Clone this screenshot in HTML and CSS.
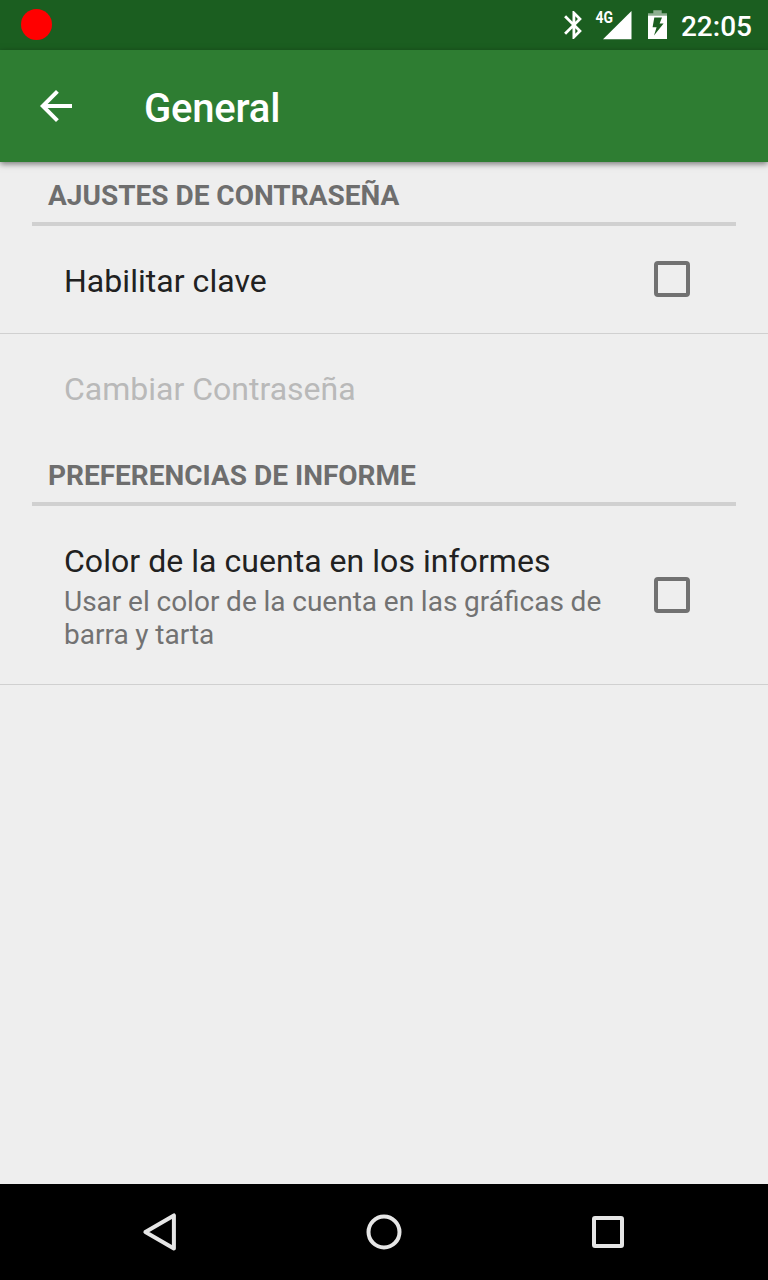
FILE: index.html
```html
<!DOCTYPE html>
<html lang="es">
<head>
<meta charset="utf-8">
<title>General</title>
<link rel="stylesheet" href="styles.css">
</head>
<body>
<div class="screen">
  <div class="status-bar">
    <span class="record-dot"></span>
    <div class="status-icons">
      <svg class="bluetooth" width="18" height="28" viewBox="5 2 12.71 20"><path fill="#fff" d="M17.71 7.71L12 2h-1v7.59L6.41 5 5 6.41 10.59 12 5 17.59 6.41 19 11 14.41V22h1l5.71-5.71-4.3-4.29 4.3-4.29zM13 5.83l1.88 1.88L13 9.59V5.83zm1.88 10.46L13 18.17v-3.76l1.88 1.88z"/></svg>
      <svg class="signal" width="36" height="30" viewBox="0 0 36 30"><path fill="#fff" d="M7 29.3L35.5 1v28.3z"/><text class="network" x="-0.5" y="13" textLength="17.5" lengthAdjust="spacingAndGlyphs">4G</text></svg>
      <svg class="battery" width="19" height="30" viewBox="0 0 19 30"><path fill="#fff" fill-opacity=".5" d="M5.3 .3h8.4v3H19v2.2H0V3.3h5.3z"/><path fill="#fff" fill-rule="evenodd" d="M0 5.5h19V29H0zM6.3 7.5L4.6 17.2h4L6 25.6l9.6-12.2h-4L14 7.5z"/></svg>
      <span class="clock">22:05</span>
    </div>
  </div>
  <header class="toolbar">
    <svg class="back" width="32" height="32" viewBox="4 4 16 16"><path fill="#fff" d="M20 11H7.83l5.59-5.59L12 4l-8 8 8 8 1.41-1.41L7.83 13H20v-2z"/></svg>
    <h1 class="title">General</h1>
  </header>
  <main class="settings">
    <h2 class="category">AJUSTES DE CONTRASEÑA</h2>
    <div class="preference divided">
      <div class="label">Habilitar clave</div>
      <span class="checkbox"></span>
    </div>
    <div class="preference disabled">
      <div class="label">Cambiar Contraseña</div>
    </div>
    <h2 class="category">PREFERENCIAS DE INFORME</h2>
    <div class="preference divided two-part">
      <div class="texts">
        <div class="label">Color de la cuenta en los informes</div>
        <div class="summary">Usar el color de la cuenta en las gráficas de barra y tarta</div>
      </div>
      <span class="checkbox"></span>
    </div>
  </main>
  <nav class="nav-bar">
    <svg width="40" height="40" viewBox="0 0 40 40"><path class="nav-shape" d="M33.9 3.4v33.2L5.4 20z"/></svg>
    <svg width="40" height="40" viewBox="0 0 40 40"><circle class="nav-shape" cx="20" cy="20" r="15.5"/></svg>
    <svg width="40" height="40" viewBox="0 0 40 40"><rect class="nav-shape" x="6" y="6" width="28" height="28" rx="1"/></svg>
  </nav>
</div>
</body>
</html>
```
FILE: styles.css
```css
* { box-sizing: border-box; }
body { margin: 0; font-family: Roboto, sans-serif; }
svg { display: block; flex: none; }
.screen {
  display: flex;
  flex-direction: column;
  width: 768px;
  height: 1280px;
  background: #eee;
}
.status-bar {
  display: flex;
  justify-content: space-between;
  align-items: center;
  height: 50px;
  padding: 0 16px 0 21px;
  background: #1b5e20;
}
.record-dot {
  width: 31px;
  height: 31px;
  margin-bottom: 1px;
  border-radius: 50%;
  background: #f00;
}
.status-icons { display: flex; align-items: center; }
.signal { margin-left: 14px; overflow: visible; }
.network { font-size: 16px; font-weight: 700; fill: #fff; }
.battery { margin: 0 14px 0 16px; }
.clock {
  font-size: 28px;
  font-weight: 500;
  line-height: 34px;
  color: #fff;
  padding-top: 4px;
}
.toolbar {
  display: flex;
  align-items: center;
  gap: 72px;
  height: 112px;
  padding-left: 40px;
  background: #2e7d32;
  box-shadow: 0 2px 6px rgba(0, 0, 0, .5);
}
.title {
  margin: 0;
  padding-top: 6px;
  font-size: 40px;
  font-weight: 500;
  line-height: 48px;
  letter-spacing: -.2px;
  color: #fff;
}
.settings { flex: 1; }
.category {
  height: 64px;
  margin: 0 32px;
  padding: 17px 16px 0;
  border-bottom: 4px solid #d0d0d0;
  font-size: 28px;
  font-weight: 700;
  line-height: 33px;
  color: #6e6e6e;
}
.preference {
  display: flex;
  justify-content: space-between;
  align-items: center;
  min-height: 108px;
  padding: 32px 78px 33px 64px;
}
.divided { border-bottom: 1px solid #d0d0d0; }
.disabled { padding-bottom: 34px; }
.two-part { padding-bottom: 32px; }
.label {
  font-size: 32px;
  line-height: 38px;
  padding-top: 4px;
  letter-spacing: .04px;
  color: #212121;
}
.disabled .label { color: #b9b9b9; letter-spacing: 0; }
.texts { width: 560px; padding-bottom: 1px; }
.summary {
  font-size: 28px;
  line-height: 33px;
  padding-top: 5px;
  word-spacing: -.2px;
  color: #727272;
}
.checkbox {
  flex: none;
  width: 36px;
  height: 36px;
  border: 4px solid #717171;
  border-radius: 4px;
}
.nav-bar {
  display: flex;
  justify-content: center;
  align-items: center;
  gap: 184px;
  height: 96px;
  background: #000;
}
.nav-shape { fill: none; stroke: #e6e6e6; stroke-width: 4; stroke-linejoin: round; }
```
